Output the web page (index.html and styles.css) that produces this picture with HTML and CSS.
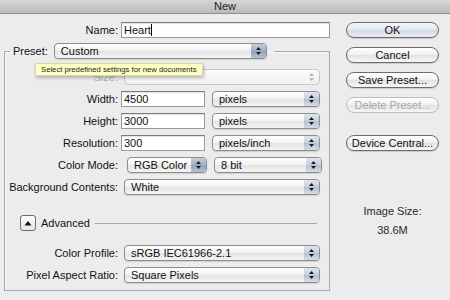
FILE: index.html
```html
<!DOCTYPE html>
<html lang="en">
<head>
    <meta charset="UTF-8">
    <title>New</title>
    <link rel="stylesheet" href="styles.css">
</head>
<body>

    <!-- Window title -->
    <div class="titlebar">New</div>

    <div class="dialog">
        <div class="main">
            <div class="name-row">
                <span class="lbl">Name:</span>
                <div class="input name-input">Heart<span class="caret"></span></div>
            </div>

            <fieldset class="preset">
                <legend>
                    <span class="legend-label">Preset:</span>
                    <span class="select preset-select">
                        <span class="value">Custom</span>
                        <span class="cap cap-dark">
                            <svg width="7" height="10" viewBox="0 0 7 10"><path d="M1 4L3.5 1L6 4Z M1 6L3.5 9L6 6Z" fill="#1c1c1c"/></svg>
                        </span>
                    </span>
                </legend>

                <div class="tooltip">Select predefined settings for new documents</div>

                <div class="row first">
                    <span class="lbl disabled">Size:</span>
                    <span class="select disabled-select wide">
                        <span class="value"></span>
                        <span class="cap cap-off">
                            <svg width="7" height="10" viewBox="0 0 7 10"><path d="M1 4L3.5 1L6 4Z M1 6L3.5 9L6 6Z" fill="#b4b4b4"/></svg>
                        </span>
                    </span>
                </div>

                <div class="row">
                    <span class="lbl">Width:</span>
                    <div class="input num-input">4500</div>
                    <span class="select unit">
                        <span class="value">pixels</span>
                        <span class="cap"><svg width="7" height="10" viewBox="0 0 7 10"><path d="M1 4L3.5 1L6 4Z M1 6L3.5 9L6 6Z" fill="#1c1c1c"/></svg></span>
                    </span>
                </div>

                <div class="row">
                    <span class="lbl">Height:</span>
                    <div class="input num-input">3000</div>
                    <span class="select unit">
                        <span class="value">pixels</span>
                        <span class="cap"><svg width="7" height="10" viewBox="0 0 7 10"><path d="M1 4L3.5 1L6 4Z M1 6L3.5 9L6 6Z" fill="#1c1c1c"/></svg></span>
                    </span>
                </div>

                <div class="row">
                    <span class="lbl">Resolution:</span>
                    <div class="input num-input">300</div>
                    <span class="select unit">
                        <span class="value">pixels/inch</span>
                        <span class="cap"><svg width="7" height="10" viewBox="0 0 7 10"><path d="M1 4L3.5 1L6 4Z M1 6L3.5 9L6 6Z" fill="#1c1c1c"/></svg></span>
                    </span>
                </div>

                <div class="row">
                    <span class="lbl">Color Mode:</span>
                    <span class="select mode">
                        <span class="value">RGB Color</span>
                        <span class="cap cap-dark"><svg width="7" height="10" viewBox="0 0 7 10"><path d="M1 4L3.5 1L6 4Z M1 6L3.5 9L6 6Z" fill="#1c1c1c"/></svg></span>
                    </span>
                    <span class="select unit">
                        <span class="value">8 bit</span>
                        <span class="cap"><svg width="7" height="10" viewBox="0 0 7 10"><path d="M1 4L3.5 1L6 4Z M1 6L3.5 9L6 6Z" fill="#1c1c1c"/></svg></span>
                    </span>
                </div>

                <div class="row">
                    <span class="lbl">Background Contents:</span>
                    <span class="select wide">
                        <span class="value">White</span>
                        <span class="cap"><svg width="7" height="10" viewBox="0 0 7 10"><path d="M1 4L3.5 1L6 4Z M1 6L3.5 9L6 6Z" fill="#1c1c1c"/></svg></span>
                    </span>
                </div>

                <!-- Advanced section -->
                <div class="advanced">
                    <span class="disclosure">
                        <svg width="8" height="6" viewBox="0 0 8 6"><path d="M0.5 5.5L4 1L7.5 5.5Z" fill="#111"/></svg>
                    </span>
                    <span class="adv-label">Advanced</span>
                    <span class="adv-line"></span>
                </div>

                <div class="row adv-first">
                    <span class="lbl">Color Profile:</span>
                    <span class="select wide">
                        <span class="value">sRGB IEC61966-2.1</span>
                        <span class="cap"><svg width="7" height="10" viewBox="0 0 7 10"><path d="M1 4L3.5 1L6 4Z M1 6L3.5 9L6 6Z" fill="#1c1c1c"/></svg></span>
                    </span>
                </div>

                <div class="row">
                    <span class="lbl">Pixel Aspect Ratio:</span>
                    <span class="select wide">
                        <span class="value">Square Pixels</span>
                        <span class="cap"><svg width="7" height="10" viewBox="0 0 7 10"><path d="M1 4L3.5 1L6 4Z M1 6L3.5 9L6 6Z" fill="#1c1c1c"/></svg></span>
                    </span>
                </div>
            </fieldset>
        </div>

        <!-- Buttons on the right -->
        <div class="side">
            <button class="btn btn-default">OK</button>
            <button class="btn">Cancel</button>
            <button class="btn">Save Preset...</button>
            <button class="btn" disabled>Delete Preset...</button>
            <button class="btn device">Device Central...</button>

            <div class="image-size">
                <div class="size-label">Image Size:</div>
                <div class="size-value">38.6M</div>
            </div>
        </div>
    </div>

</body>
</html>
```

FILE: styles.css
```css
body {
    margin: 0;
    background-color: #ececec;
    font-family: 'Liberation Sans', Arial, sans-serif;
    font-size: 11px;
    color: #111;
}

.titlebar {
    height: 13px;
    line-height: 13px;
    text-align: center;
    font-size: 11px;
    color: #222;
    background: linear-gradient(#d6d6d6, #bababa);
    border-bottom: 1px solid #8e8e8e;
}

.dialog {
    display: flex;
    padding-top: 8px;
}

.main {
    width: 330px;
}

.lbl {
    width: 113px;
    flex-shrink: 0;
    text-align: right;
    white-space: nowrap;
}
.lbl.disabled {
    color: #b2b2b2;
}

.name-row {
    display: flex;
    align-items: center;
    height: 16px;
    padding-left: 5px;
}

/* Text fields */
.input {
    box-sizing: border-box;
    height: 16px;
    line-height: 14px;
    background-color: #fff;
    border: 1px solid #9a9a9a;
    border-top-color: #7a7a7a;
    padding-left: 2px;
    margin-left: 3px;
    box-shadow: inset 0 1px 1px rgba(0, 0, 0, 0.12);
}
.name-input {
    flex: 1;
}
.num-input {
    width: 84px;
}
.caret {
    display: inline-block;
    width: 1px;
    height: 12px;
    background-color: #000;
    vertical-align: -2px;
}

/* Preset group */
.preset {
    position: relative;
    margin: 5px 0 0 4px;
    padding: 0 0 7px 0;
    width: 324px;
    border: 1px solid #a9a9a9;
    box-shadow: inset 1px 1px 0 #f8f8f8;
}
.preset legend {
    display: flex;
    align-items: center;
    margin-left: 5px;
    padding: 0 7px 0 3px;
    height: 16px;
}
.legend-label {
    margin-right: 6px;
}

/* Pop-up menus */
.select {
    box-sizing: border-box;
    display: flex;
    align-items: stretch;
    height: 16px;
    margin-left: 6px;
    border: 1px solid #8c8c8c;
    border-radius: 4px;
    background: linear-gradient(#ffffff, #f1f1f1 50%, #e4e4e4 51%, #f4f4f4);
    box-shadow: 0 1px 1px rgba(0, 0, 0, 0.12);
    overflow: hidden;
}
.select .value {
    flex: 1;
    line-height: 14px;
    padding-left: 6px;
    white-space: nowrap;
}
.select .cap {
    width: 15px;
    display: flex;
    align-items: center;
    justify-content: center;
    background: linear-gradient(#dfe5ee, #c5cfdc 50%, #b4c0d0 51%, #d3dbe6);
}
.select .cap-dark {
    background: linear-gradient(#c4ceda, #9fafc3 50%, #8fa1b8 51%, #b5c2d2);
}
.select .cap-off {
    background: none;
}
.disabled-select {
    border-color: #c8c8c8;
    background: linear-gradient(#fbfbfb, #f0f0f0);
    box-shadow: none;
}

.preset-select {
    width: 213px;
    margin-left: 0;
}
.wide {
    width: 196px;
}
.unit {
    width: 108px;
    margin-left: 7px;
}
.mode {
    width: 80px;
    margin-left: 9px;
}

.row {
    display: flex;
    align-items: center;
    height: 16px;
    margin-top: 6px;
}
.row.first {
    margin-top: 10px;
}
.row.adv-first {
    margin-top: 14px;
}

/* Tooltip over the Size row */
.tooltip {
    position: absolute;
    left: 30px;
    top: 4px;
    height: 11px;
    line-height: 11px;
    padding: 0 5px;
    font-size: 7.7px;
    color: #222;
    background-color: #ffffc4;
    border: 1px solid #d9d9a6;
    box-shadow: 1px 2px 3px rgba(0, 0, 0, 0.25);
    white-space: nowrap;
    z-index: 2;
}

/* Advanced disclosure */
.advanced {
    display: flex;
    align-items: center;
    height: 16px;
    margin-top: 20px;
    padding-left: 15px;
}
.disclosure {
    box-sizing: border-box;
    width: 16px;
    height: 16px;
    display: flex;
    align-items: center;
    justify-content: center;
    border: 1px solid #6e6e6e;
    border-radius: 3px;
    background: linear-gradient(#ffffff, #e6e6e6);
}
.adv-label {
    margin-left: 5px;
}
.adv-line {
    flex: 1;
    height: 1px;
    margin: 0 12px 0 5px;
    background-color: #a9a9a9;
}

/* Right column */
.side {
    width: 93px;
    margin-left: 16px;
    display: flex;
    flex-direction: column;
}
.btn {
    box-sizing: border-box;
    height: 16px;
    padding: 0;
    margin-bottom: 9px;
    font-family: inherit;
    font-size: 11px;
    color: #111;
    border: 1px solid #6c6c6c;
    border-radius: 8px;
    background: linear-gradient(#ffffff, #f0f0f0 50%, #e2e2e2 51%, #f6f6f6);
    box-shadow: 0 1px 1px rgba(0, 0, 0, 0.15);
}
.btn-default {
    background: linear-gradient(#f4f6f9, #e3e8ee 50%, #d3dae3 51%, #e8edf2);
}
.btn:disabled {
    color: #a6a6a6;
    border-color: #bdbdbd;
    box-shadow: none;
}
.btn.device {
    margin-top: 13px;
}

.image-size {
    margin-top: 45px;
    text-align: center;
    color: #2a2a2a;
}
.size-value {
    margin-top: 7px;
}
```
